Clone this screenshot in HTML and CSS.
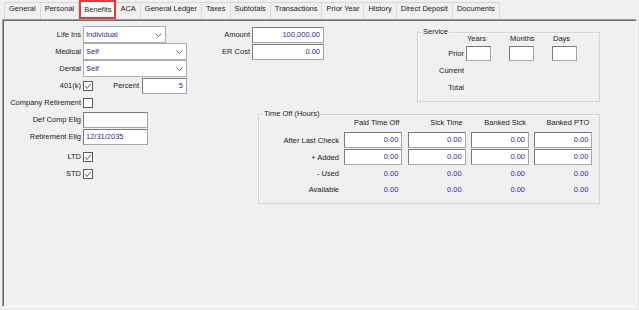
FILE: index.html
```html
<!DOCTYPE html>
<html lang="en">
<head>
    <meta charset="UTF-8">
    <meta name="viewport" content="width=device-width, initial-scale=1.0">
    <title>Employee - Benefits</title>
    <link rel="stylesheet" href="styles.css">
</head>
<body>
    <div class="tabs">
        <div class="tab first">General</div>
        <div class="tab">Personal</div>
        <div class="tab active">Benefits</div>
        <div class="tab">ACA</div>
        <div class="tab">General Ledger</div>
        <div class="tab">Taxes</div>
        <div class="tab">Subtotals</div>
        <div class="tab">Transactions</div>
        <div class="tab">Prior Year</div>
        <div class="tab">History</div>
        <div class="tab">Direct Deposit</div>
        <div class="tab">Documents</div>
    </div>

    <div class="panel">
        <!-- left column: plan choices -->
        <div class="left-col">
            <div class="row">
                <span class="lbl">Life Ins</span>
                <div class="select short">
                    <span>Individual</span>
                    <svg width="7" height="4" viewBox="0 0 7 4"><path d="M0.5 0.5 L3.5 3.5 L6.5 0.5" fill="none" stroke="#707070"/></svg>
                </div>
            </div>
            <div class="row">
                <span class="lbl">Medical</span>
                <div class="select">
                    <span>Self</span>
                    <svg width="7" height="4" viewBox="0 0 7 4"><path d="M0.5 0.5 L3.5 3.5 L6.5 0.5" fill="none" stroke="#707070"/></svg>
                </div>
            </div>
            <div class="row">
                <span class="lbl">Dental</span>
                <div class="select">
                    <span>Self</span>
                    <svg width="7" height="4" viewBox="0 0 7 4"><path d="M0.5 0.5 L3.5 3.5 L6.5 0.5" fill="none" stroke="#707070"/></svg>
                </div>
            </div>
            <div class="row">
                <span class="lbl">401(k)</span>
                <div class="ctl">
                    <svg class="check" width="10" height="10" viewBox="0 0 10 10"><rect x="0.5" y="0.5" width="9" height="9" fill="#fff" stroke="#5a5a5a"/><path d="M2 5 L4 7.5 L8 2.5" fill="none" stroke="#5a5a5a"/></svg>
                    <span class="lbl-inline">Percent</span>
                    <div class="field num pct">5</div>
                </div>
            </div>
            <div class="row">
                <span class="lbl">Company Retirement</span>
                <svg class="check" width="10" height="10" viewBox="0 0 10 10"><rect x="0.5" y="0.5" width="9" height="9" fill="#fff" stroke="#5a5a5a"/></svg>
            </div>
            <div class="row">
                <span class="lbl">Def Comp Elig</span>
                <div class="field date"></div>
            </div>
            <div class="row">
                <span class="lbl">Retirement Elig</span>
                <div class="field date">12/31/2035</div>
            </div>
            <div class="row spaced">
                <span class="lbl">LTD</span>
                <svg class="check" width="10" height="10" viewBox="0 0 10 10"><rect x="0.5" y="0.5" width="9" height="9" fill="#fff" stroke="#5a5a5a"/><path d="M2 5 L4 7.5 L8 2.5" fill="none" stroke="#5a5a5a"/></svg>
            </div>
            <div class="row">
                <span class="lbl">STD</span>
                <svg class="check" width="10" height="10" viewBox="0 0 10 10"><rect x="0.5" y="0.5" width="9" height="9" fill="#fff" stroke="#5a5a5a"/><path d="M2 5 L4 7.5 L8 2.5" fill="none" stroke="#5a5a5a"/></svg>
            </div>
        </div>

        <div class="right-area">
            <div class="top-row">
                <div class="cost">
                    <div class="row">
                        <span class="lbl">Amount</span>
                        <div class="field num money">100,000.00</div>
                    </div>
                    <div class="row">
                        <span class="lbl">ER Cost</span>
                        <div class="field num money">0.00</div>
                    </div>
                </div>

                <div class="group service">
                    <span class="caption">Service</span>
                    <div class="service-grid">
                        <span></span>
                        <span class="col-head">Years</span>
                        <span class="col-head">Months</span>
                        <span class="col-head">Days</span>

                        <span class="row-lbl">Prior</span>
                        <div class="field small"></div>
                        <div class="field small"></div>
                        <div class="field small"></div>

                        <span class="row-lbl">Current</span>
                        <span></span><span></span><span></span>

                        <span class="row-lbl">Total</span>
                        <span></span><span></span><span></span>
                    </div>
                </div>
            </div>

            <div class="group timeoff">
                <span class="caption">Time Off (Hours)</span>
                <div class="timeoff-grid">
                    <span></span>
                    <span class="col-head">Paid Time Off</span>
                    <span class="col-head">Sick Time</span>
                    <span class="col-head">Banked Sick</span>
                    <span class="col-head">Banked PTO</span>

                    <span class="row-lbl">After Last Check</span>
                    <div class="field num">0.00</div>
                    <div class="field num">0.00</div>
                    <div class="field num">0.00</div>
                    <div class="field num">0.00</div>

                    <span class="row-lbl">+ Added</span>
                    <div class="field num">0.00</div>
                    <div class="field num">0.00</div>
                    <div class="field num">0.00</div>
                    <div class="field num">0.00</div>

                    <span class="row-lbl">- Used</span>
                    <span class="value">0.00</span>
                    <span class="value">0.00</span>
                    <span class="value">0.00</span>
                    <span class="value">0.00</span>

                    <span class="row-lbl">Available</span>
                    <span class="value">0.00</span>
                    <span class="value">0.00</span>
                    <span class="value">0.00</span>
                    <span class="value">0.00</span>
                </div>
            </div>
        </div>
    </div>
</body>
</html>
```

FILE: styles.css
```css
/* Employee benefits tab */
* {
    box-sizing: border-box;
}

body {
    margin: 0;
    background-color: #f0f0f0;
    font-family: "Liberation Sans", Arial, sans-serif;
    font-size: 7.5px;
    color: #1a1a1a;
}

/* tab strip */
.tabs {
    display: flex;
    align-items: flex-end;
    height: 19px;
    padding-left: 4px;
}

.tab {
    height: 17px;
    padding: 0 4px;
    line-height: 12px;
    border-top: 1px solid #d9d9d9;
    border-right: 1px solid #d9d9d9;
    white-space: nowrap;
}

.tab.first {
    border-left: 1px solid #d9d9d9;
}

.tab.active {
    height: 19px;
    padding: 0 3px;
    line-height: 15px;
    background-color: #fff;
    border: 2px solid #e5393d;
}

/* page body */
.panel {
    display: flex;
    height: 288px;
    margin: 0 2px;
    padding: 6px 0 0 1px;
    border-top: 1px solid #a0a0a0;
    border-left: 1px solid #a0a0a0;
    border-right: 1px solid #fff;
    border-bottom: 1px solid #fff;
    box-shadow: inset 1px 1px 0 #696969, 1px 1px 0 #e3e3e3;
}

.row {
    display: flex;
    align-items: center;
    height: 17px;
}

.row.spaced {
    margin-top: 3px;
}

.lbl {
    width: 77px;
    margin-right: 2px;
    text-align: right;
    white-space: nowrap;
}

.left-col {
    width: 186px;
}

.ctl {
    display: flex;
    align-items: center;
    width: 104px;
}

.lbl-inline {
    margin-left: auto;
    margin-right: 3px;
}

.check {
    display: block;
}

/* inputs */
.field {
    height: 16px;
    padding: 0 3px;
    line-height: 14px;
    background-color: #fff;
    color: #2e2e9e;
    border: 1px solid #a5a5a5;
    border-top-color: #7a7a7a;
    border-left-color: #7a7a7a;
    white-space: nowrap;
}

.field.num {
    text-align: right;
}

.field.pct {
    width: 45px;
}

.field.date {
    width: 65px;
    padding-left: 2px;
}

.select {
    display: flex;
    align-items: center;
    justify-content: space-between;
    width: 104px;
    height: 17px;
    padding: 0 3px 0 2px;
    background-color: #fff;
    color: #2e2e9e;
    border: 1px solid #acacac;
}

.select.short {
    width: 83px;
}

.select svg {
    display: block;
}

/* right side */
.right-area {
    display: flex;
    flex-direction: column;
}

.top-row {
    display: flex;
    align-items: flex-start;
}

.cost .lbl {
    width: 60px;
}

.field.money {
    width: 72px;
}

.group {
    position: relative;
    border: 1px solid #d5d5d5;
    box-shadow: inset 1px 1px 0 #fafafa;
}

.caption {
    position: absolute;
    top: -6px;
    left: 4px;
    padding: 0 1px;
    line-height: 10px;
    background-color: #f0f0f0;
}

.service {
    width: 183px;
    height: 70px;
    margin: 6px 0 0 93px;
}

.service-grid {
    display: grid;
    grid-template-columns: 48px 43px 43px 25px;
    grid-template-rows: 11px 15px 15px 15px;
    row-gap: 2px;
    align-items: center;
}

.service-grid .col-head {
    padding-left: 1px;
    line-height: 11px;
}

.service-grid .row-lbl {
    padding-right: 2px;
    text-align: right;
}

.field.small {
    width: 25px;
    height: 15px;
}

.timeoff {
    width: 342px;
    height: 90px;
    margin: 12px 0 0 68px;
    padding-top: 3px;
}

.timeoff-grid {
    display: grid;
    grid-template-columns: 80px 58px 58px 58px 58px;
    grid-template-rows: auto 16px 16px 15px 15px;
    column-gap: 5.33px;
    row-gap: 1px;
    align-items: center;
}

.timeoff-grid .col-head {
    height: 10px;
    margin-bottom: 3px;
    padding-right: 3px;
    line-height: 10px;
    text-align: right;
    white-space: nowrap;
}

.timeoff-grid .row-lbl {
    text-align: right;
    white-space: nowrap;
}

.value {
    padding-right: 4px;
    text-align: right;
    color: #2e2e9e;
}
```
